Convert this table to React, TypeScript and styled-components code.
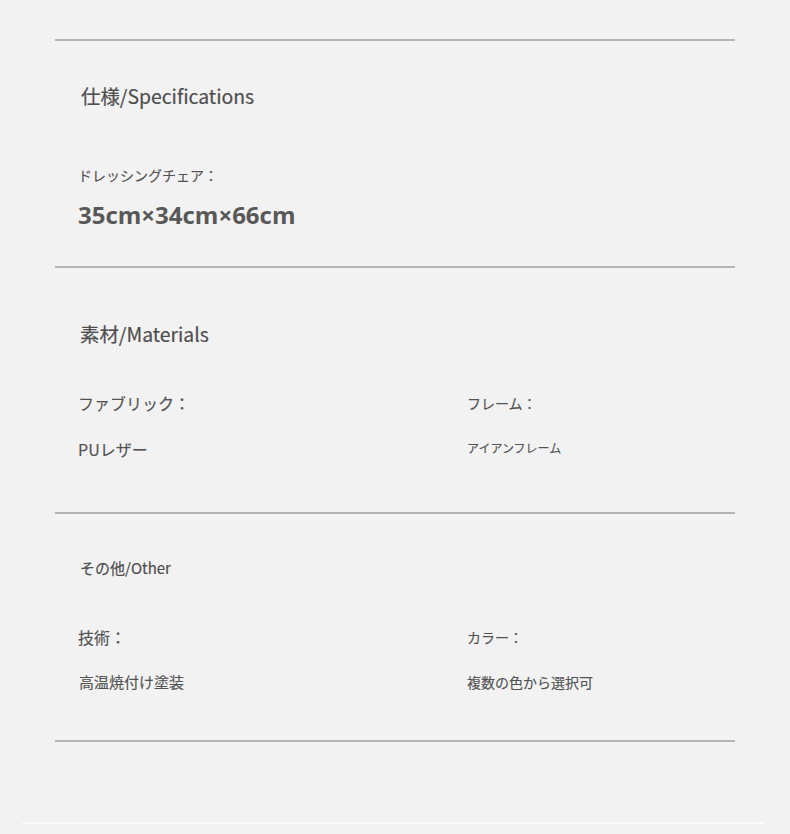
import React from "react";
import styled, { createGlobalStyle } from "styled-components";

const Global = createGlobalStyle`
  html, body { margin: 0; padding: 0; background: #f2f2f2; }
  body { font-family: "Noto Sans CJK JP", "Noto Sans", sans-serif; color: #555; }
`;

const Page = styled.div`
  width: 790px;
  height: 834px;
  background: #f2f2f2;
  padding-top: 39px;
  box-sizing: border-box;
  overflow: hidden;
  display: flex;
  flex-direction: column;
`;

const Sheet = styled.div`
  margin: 0 55px;
  width: 680px;
`;

const Divider = styled.div`
  height: 2px;
  background: #b4b4b4;
`;

const Section = styled.section<{ $top: number; $bottom: number }>`
  padding: ${(p) => p.$top}px 0 ${(p) => p.$bottom}px 0;
`;

const Title = styled.h2<{ $size: number; $indent: number }>`
  margin: 0;
  padding-left: ${(p) => p.$indent}px;
  font-size: ${(p) => p.$size}px;
  line-height: 26px;
  font-weight: 400;
  color: #4e4e4e;
  -webkit-text-stroke: 0.2px #4e4e4e;
`;

const Label = styled.div<{ $size: number; $gap: number; $indent?: number }>`
  margin-top: ${(p) => p.$gap}px;
  padding-left: ${(p) => p.$indent ?? 0}px;
  font-size: ${(p) => p.$size}px;
  line-height: 22px;
  color: #525252;
  -webkit-text-stroke: 0.15px #525252;
`;

const BigValue = styled.div`
  margin-top: 13px;
  padding-left: 23px;
  font-family: "Open Sans", "Noto Sans CJK JP", sans-serif;
  font-size: 24px;
  line-height: 32px;
  font-weight: 700;
  color: #585858;
`;

const Grid = styled.div`
  display: grid;
  grid-template-columns: 389px 1fr;
  padding-left: 23px;
`;

const Cell = styled.div``;

const Footer = styled.div`
  margin: auto 25px 10px 22px;
  height: 2px;
  background: #fafafa;
`;

export default function App() {
  return (
    <Page>
      <Global />
      <Sheet>
        <Divider />
        <Section $top={42} $bottom={35}>
          <Title $size={19.4} $indent={26}>仕様/Specifications</Title>
          <Label $size={14} $gap={55} $indent={23}>ドレッシングチェア：</Label>
          <BigValue>35cm×34cm×66cm</BigValue>
        </Section>
        <Divider />
        <Section $top={53} $bottom={52}>
          <Title $size={19.4} $indent={25}>素材/Materials</Title>
          <Grid>
            <Cell>
              <Label $size={16} $gap={45}>ファブリック：</Label>
              <Label $size={16} $gap={24} $indent={-3}>PUレザー</Label>
            </Cell>
            <Cell>
              <Label $size={14} $gap={45}>フレーム：</Label>
              <Label $size={12} $gap={23}>アイアンフレーム</Label>
            </Cell>
          </Grid>
        </Section>
        <Divider />
        <Section $top={41} $bottom={47}>
          <Title $size={15} $indent={25}>その他/Other</Title>
          <Grid>
            <Cell>
              <Label $size={16} $gap={45} $indent={-1}>技術：</Label>
              <Label $size={15} $gap={23} $indent={1}>高温焼付け塗装</Label>
            </Cell>
            <Cell>
              <Label $size={14} $gap={45}>カラー：</Label>
              <Label $size={14} $gap={23} $indent={-2}>複数の色から選択可</Label>
            </Cell>
          </Grid>
        </Section>
        <Divider />
      </Sheet>
      <Footer />
    </Page>
  );
}
